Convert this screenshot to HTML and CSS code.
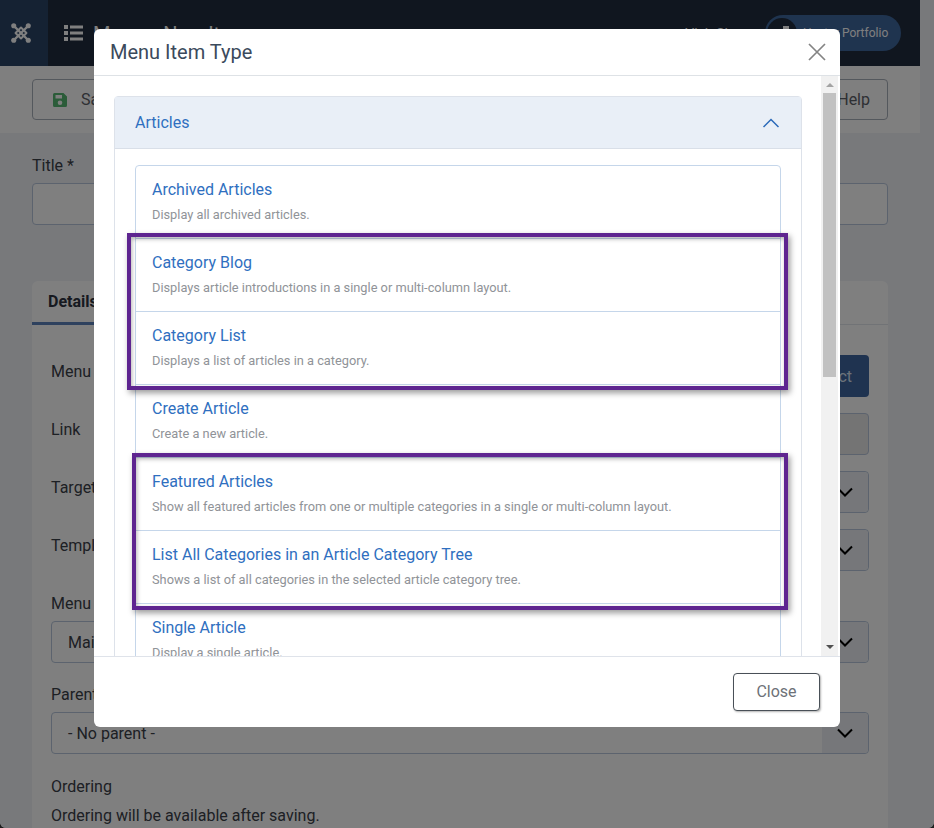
FILE: index.html
```html
<!DOCTYPE html>
<html lang="en">
<head>
<meta charset="utf-8">
<title>Menu Item Type</title>
<link rel="stylesheet" href="styles.css">
</head>
<body>
<div class="window">
  <div class="page">
    <header class="topbar">
      <div class="logo">
        <svg width="20" height="20" viewBox="0 0 22 22" fill="none" stroke="#fff" stroke-width="2.600" stroke-linecap="round">
          <path d="M3 3L19 19M19 3L3 19"/>
          <path d="M11 5L17 11L11 17L5 11Z" stroke-width="2.200" stroke-linejoin="round"/>
          <circle cx="3" cy="3" r="2.800" fill="#fff" stroke="none"/>
          <circle cx="19" cy="3" r="2.800" fill="#fff" stroke="none"/>
          <circle cx="3" cy="19" r="2.800" fill="#fff" stroke="none"/>
          <circle cx="19" cy="19" r="2.800" fill="#fff" stroke="none"/>
        </svg>
      </div>
      <div class="page-title">
        <svg width="19" height="16" viewBox="0 0 19 16" fill="#fff">
          <rect x="0" y="0" width="4" height="4"/><rect x="6" y="0.500" width="13" height="3"/>
          <rect x="0" y="6" width="4" height="4"/><rect x="6" y="6.500" width="13" height="3"/>
          <rect x="0" y="12" width="4" height="4"/><rect x="6" y="12.500" width="13" height="3"/>
        </svg>
        <span>Menus: New Item</span>
      </div>
      <div class="top-right">
        <span class="top-link">Visit Site</span>
        <div class="user-pill">
          <span class="avatar">
            <svg width="16" height="14" viewBox="0 0 16 14" fill="#fff"><rect x="0" y="4" width="7" height="10"/><rect x="9" y="0" width="6" height="14"/></svg>
          </span>
          <span class="user-name">Hector Portfolio</span>
        </div>
      </div>
    </header>

    <div class="toolbar">
      <button class="tool-btn">
        <svg width="14" height="14" viewBox="0 0 14 14"><path fill="#57b873" fill-rule="evenodd" d="M1.500 0H10.500L14 3.500V12.500A1.500 1.500 0 0 1 12.500 14H1.500A1.500 1.500 0 0 1 0 12.500V1.500A1.500 1.500 0 0 1 1.500 0ZM2.500 2V5.500H9V2ZM7 7.500A2.300 2.300 0 1 0 7 12.100A2.300 2.300 0 1 0 7 7.500Z"/></svg>
        <span>Save &amp; Close</span>
      </button>
      <button class="tool-btn">Help</button>
    </div>

    <main class="content">
      <label class="title-label">Title *</label>
      <div class="input title-input"></div>

      <section class="card">
        <div class="tabs"><span class="tab">Details</span></div>
        <div class="card-body">
          <div class="row">
            <span class="row-label">Menu Item Type *</span>
            <div class="row-control"><div class="input grow"></div><span class="select-btn">Select</span></div>
          </div>
          <div class="row">
            <span class="row-label">Link</span>
            <div class="row-control"><div class="input grow disabled"></div></div>
          </div>
          <div class="row">
            <span class="row-label">Target Window</span>
            <div class="row-control"><div class="select grow"><span class="select-text">Parent</span><span class="arrow"><svg class="chev" viewBox="0 0 16 10"><path d="M1 1.500L8 8.500L15 1.500"/></svg></span></div></div>
          </div>
          <div class="row">
            <span class="row-label">Template Style</span>
            <div class="row-control"><div class="select grow"><span class="select-text">Use Default</span><span class="arrow"><svg class="chev" viewBox="0 0 16 10"><path d="M1 1.500L8 8.500L15 1.500"/></svg></span></div></div>
          </div>
          <div class="stack stack-menu">
            <span class="stack-label">Menu *</span>
            <div class="select"><span class="select-text">Main Menu</span><span class="arrow"><svg class="chev" viewBox="0 0 16 10"><path d="M1 1.500L8 8.500L15 1.500"/></svg></span></div>
          </div>
          <div class="stack">
            <span class="stack-label">Parent Item</span>
            <div class="select"><span class="select-text">- No parent -</span><span class="arrow"><svg class="chev" viewBox="0 0 16 10"><path d="M1 1.500L8 8.500L15 1.500"/></svg></span></div>
          </div>
          <div class="stack stack-order">
            <span class="stack-label">Ordering</span>
            <p class="note">Ordering will be available after saving.</p>
          </div>
        </div>
      </section>
    </main>
  </div>

  <div class="backdrop"></div>

  <div class="modal">
    <div class="modal-head">
      <h2 class="modal-title">Menu Item Type</h2>
      <svg class="modal-x" width="18" height="18" viewBox="0 0 18 18"><path d="M1 1L17 17M17 1L1 17"/></svg>
    </div>
    <div class="modal-mid">
      <div class="modal-scroll">
        <div class="accordion">
          <div class="acc-head">
            <span>Articles</span>
            <svg class="acc-chev" width="16" height="10" viewBox="0 0 16 10"><path d="M0.500 9L8 1.500L15.500 9"/></svg>
          </div>
          <div class="acc-body">
            <ul class="types">
              <li class="type"><a class="type-name">Archived Articles</a><small class="type-desc">Display all archived articles.</small></li>
              <li class="type"><a class="type-name">Category Blog</a><small class="type-desc">Displays article introductions in a single or multi-column layout.</small></li>
              <li class="type"><a class="type-name">Category List</a><small class="type-desc">Displays a list of articles in a category.</small></li>
              <li class="type"><a class="type-name">Create Article</a><small class="type-desc">Create a new article.</small></li>
              <li class="type"><a class="type-name">Featured Articles</a><small class="type-desc">Show all featured articles from one or multiple categories in a single or multi-column layout.</small></li>
              <li class="type"><a class="type-name">List All Categories in an Article Category Tree</a><small class="type-desc">Shows a list of all categories in the selected article category tree.</small></li>
              <li class="type"><a class="type-name">Single Article</a><small class="type-desc">Display a single article.</small></li>
              <li class="mark mark-one"></li>
              <li class="mark mark-two"></li>
            </ul>
          </div>
        </div>
      </div>
      <div class="scrollbar">
        <span class="sb-up"></span>
        <span class="sb-thumb"></span>
        <span class="sb-down"></span>
      </div>
    </div>
    <div class="modal-foot">
      <button class="close-btn">Close</button>
    </div>
  </div>
</div>
</body>
</html>
```
FILE: styles.css
```css
* { box-sizing: border-box; }
html, body { margin: 0; padding: 0; height: 100%; background: #1e1e1e; overflow: hidden; }
body { font-family: Roboto, "Liberation Sans", sans-serif; font-size: 16px; color: #3a4048; }

.window { position: relative; width: 934px; height: 828px; overflow: hidden; border-radius: 0 0 6px 6px; background: #f0f2f7; }
.page { width: 920px; height: 828px; overflow: hidden; }
.backdrop { position: absolute; inset: 0; background: rgba(0, 0, 0, .5); }

/* top bar */
.topbar { display: flex; align-items: center; height: 66px; background: #202c3e; color: #fff; }
.logo { display: flex; align-items: center; justify-content: flex-start; width: 48px; height: 66px; padding-left: 11px; background: #2a4466; }
.page-title { display: flex; align-items: center; gap: 10px; margin-left: 16px; font-size: 20px; }
.page-title span { position: relative; top: 1px; }
.top-right { display: flex; align-items: center; gap: 25px; margin-left: auto; margin-right: 19px; }
.top-link { padding-top: 2px; font-size: 14px; }
.user-pill { display: flex; align-items: center; gap: 6px; width: 136px; height: 36px; padding-left: 2px; border-radius: 18px; background: #3e689e; font-size: 12px; white-space: nowrap; }
.avatar { display: flex; align-items: center; justify-content: center; flex: none; width: 30px; height: 30px; border-radius: 50%; background: #202c3e; }

/* toolbar */
.toolbar { display: flex; justify-content: space-between; height: 67px; padding: 13px 32px; background: #fff; }
.tool-btn { display: flex; align-items: center; gap: 14px; height: 41px; padding: 0 17px 0 20px; background: #fff; border: 1px solid #a9b0ba; border-radius: 4px; font: inherit; color: #5c6068; }

/* form */
.content { padding: 21px 32px 0; }
.title-label { display: block; height: 24px; line-height: 24px; margin-bottom: 5px; }
.input, .select { height: 42px; background: #fff; border: 1px solid #b8c6dc; border-radius: 4px; }
.grow { flex: 1; }
.disabled { background: #e9e9e9; }

.card { margin-top: 56px; background: #fff; border-radius: 6px 6px 0 0; }
.tabs { height: 44px; border-bottom: 1px solid #e3e6ec; }
.tab { display: inline-block; height: 44px; padding: 9px 16px 0; font-weight: 700; color: #2d3340; line-height: 24px; border-bottom: 3px solid #5c82bd; }
.card-body { padding: 30px 19px 0; }
.row { display: flex; align-items: flex-start; height: 42px; margin-bottom: 16px; }
.row-label { width: 240px; flex: none; padding-top: 5px; line-height: 24px; }
.row-control { display: flex; flex: 1; height: 42px; }
.select-btn { display: flex; align-items: center; padding: 0 17px; height: 42px; border-radius: 4px; background: #3e66a0; color: #d8e4f4; }
.select { display: flex; align-items: center; justify-content: space-between; }
.select-text { padding-left: 16px; }
.arrow { display: flex; align-items: center; justify-content: center; width: 46px; height: 40px; background: #eceff5; border-radius: 0 4px 4px 0; }
.chev { width: 16px; height: 10px; fill: none; stroke: #000; stroke-width: 2; }
.stack { margin-top: 20px; }
.stack-menu { margin-top: 21px; }
.stack-order { margin-top: 21px; }
.stack-label { display: block; height: 24px; line-height: 24px; margin-bottom: 5px; }
.note { margin: 4px 0 0; line-height: 24px; }

/* modal */
.modal { position: absolute; left: 94px; top: 29px; display: flex; flex-direction: column; width: 746px; height: 698px; background: #fff; border-radius: 6px; overflow: hidden; color: #3b4a5c; }
.modal-head { display: flex; align-items: center; justify-content: space-between; flex: none; height: 47px; padding: 0 14px 0 16px; border-bottom: 1px solid #dee2e6; }
.modal-title { margin: 0; font-size: 20px; font-weight: 400; line-height: 46px; color: #3b4a5c; }
.modal-x { fill: none; stroke: #848484; stroke-width: 1.700; }
.modal-mid { display: flex; flex: 1; min-height: 0; border-bottom: 1px solid #dfe3ea; }
.modal-scroll { flex: 1; min-width: 0; overflow: hidden; padding: 20px 20px 0; }
.scrollbar { display: flex; flex-direction: column; align-items: center; flex: none; width: 17px; margin-right: 2px; margin-left: 1px; background: #f1f1f1; }
.sb-up { margin-top: 7px; border: 4px solid transparent; border-top: 0; border-bottom: 4px solid #a3a3a3; }
.sb-thumb { width: 13px; height: 284px; margin-top: 6px; background: #c1c1c1; }
.sb-down { margin-top: auto; margin-bottom: 7px; border: 4px solid transparent; border-bottom: 0; border-top: 4px solid #505050; }

.accordion { width: 688px; border: 1px solid #dde2ea; border-radius: 4px 4px 0 0; }
.acc-head { display: flex; align-items: center; justify-content: space-between; height: 52px; padding: 0 22px 0 20px; background: #e9eff7; border-bottom: 1px solid #d9dfe8; color: #2f6fc0; }
.acc-chev { fill: none; stroke: #2a69b8; stroke-width: 1.500; }
.acc-body { padding: 16px 20px 20px; }
.types { position: relative; margin: 0; padding: 0; list-style: none; border: 1px solid #c5d6ea; border-radius: 4px; }
.type { display: block; height: 73px; padding-top: 12px; border-bottom: 1px solid #c5d6ea; }
.type-name { display: block; padding-left: 16px; line-height: 24px; color: #2f6fc0; }
.type-desc { display: block; margin-top: 3px; padding-left: 16px; line-height: 20px; font-size: 12.800px; color: #909398; }
.mark { position: absolute; right: -8px; height: 157px; border: 4px solid #5e2590; box-shadow: 2px 3px 6px rgba(0, 0, 0, .4), inset 1px 2px 4px rgba(0, 0, 0, .3); }
.mark-one { left: -9px; top: 67px; }
.mark-two { left: -4px; top: 287px; }

.modal-foot { display: flex; align-items: center; justify-content: flex-end; flex: none; height: 70px; padding: 0 20px 0 0; }
.close-btn { width: 87px; height: 38px; margin-top: -1px; background: #fff; border: 1px solid #495057; border-radius: 4px; font: inherit; color: #6d7178; box-shadow: 1px 1px 2px rgba(0, 0, 0, .3); }
```
